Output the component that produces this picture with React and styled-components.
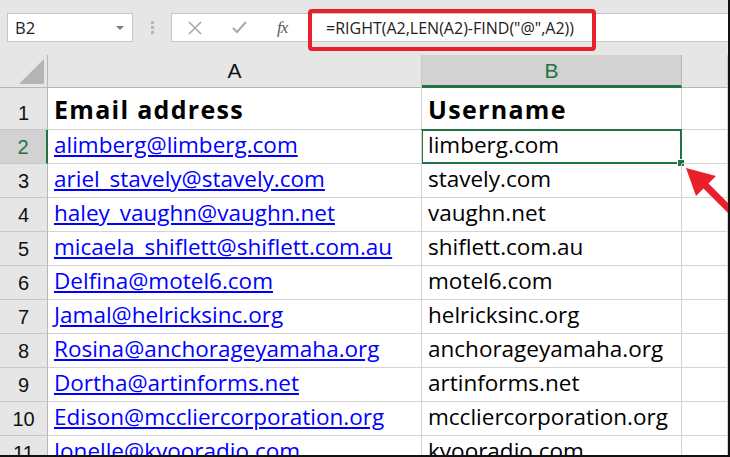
import React from 'react'
import styled, {createGlobalStyle} from 'styled-components'

const Global = createGlobalStyle`
  html, body {
    margin: 0;
    padding: 0;
    background: #fff;
  }
  body {
    font-family: "Open Sans", "Liberation Sans", sans-serif;
  }
`;

const Frame = styled.div`
  position: relative;
  width: 730px;
  height: 457px;
  box-sizing: border-box;
  border-right: 2px solid #111;
  border-bottom: 2px solid #111;
  overflow: hidden;
  background: #e6e6e6;
  display: flex;
  flex-direction: column;
`;

const FormulaBar = styled.div`
  flex-shrink: 0;
  height: 55px;
  display: flex;
  align-items: flex-start;
  padding-top: 13px;
  padding-left: 7px;
  box-sizing: border-box;
`;

const NameBox = styled.div`
  width: 126px;
  height: 29px;
  box-sizing: border-box;
  background: #fff;
  border: 1px solid #c6c6c6;
  display: flex;
  align-items: center;
  justify-content: space-between;
  padding: 0 8px 0 7px;
  font-size: 16.5px;
  color: #222;
`;

const Caret = styled.span`
  width: 0;
  height: 0;
  border-left: 4px solid transparent;
  border-right: 4px solid transparent;
  border-top: 4px solid #7a7a7a;
`;

const Grip = styled.div`
  width: 38px;
  height: 29px;
  display: flex;
  flex-direction: column;
  align-items: center;
  justify-content: center;
  gap: 2px;

  span {
    width: 3px;
    height: 3px;
    background: #b5b5b5;
  }
`;

const ButtonBox = styled.div`
  width: 137px;
  height: 29px;
  box-sizing: border-box;
  background: #fff;
  border: 1px solid #c6c6c6;
  border-right: none;
  display: flex;
  align-items: center;
  padding-left: 16px;
  gap: 30px;
  color: #a9a9a9;
`;

const Fx = styled.span`
  font-family: "Liberation Serif", serif;
  font-style: italic;
  font-size: 17px;
  color: #5a5a5a;
  letter-spacing: -1px;
`;

const FormulaInput = styled.div`
  flex: 1;
  height: 29px;
  box-sizing: border-box;
  background: #fff;
  border: 1px solid #c6c6c6;
  border-right: none;
  display: flex;
  align-items: center;
  padding-left: 17px;
  font-size: 16px;
  color: #222;
`;

const Annotation = styled.div`
  position: absolute;
  left: 308px;
  top: 9px;
  width: 288px;
  height: 42px;
  box-sizing: border-box;
  border: 4px solid #e8202a;
  border-radius: 4px;
`;

const Sheet = styled.div`
  flex: 1;
  min-height: 0;
  display: grid;
  grid-template-columns: 48px 374px 260px 1fr;
  grid-template-rows: 33px 42px repeat(10, 34px);
  background: #fff;
`;

const ColHead = styled.div`
  box-sizing: border-box;
  background: ${(p) => (p.active ? '#d2d2d2' : '#e6e6e6')};
  border-right: 1px solid ${(p) => (p.active ? '#b6b6b6' : '#c8c8c8')};
  border-bottom: ${(p) => (p.active ? '3px solid #217346' : '1px solid #b6b6b6')};
  color: ${(p) => (p.active ? '#217346' : '#111')};
  font-family: "Liberation Sans", sans-serif;
  font-size: 21px;
  display: flex;
  align-items: center;
  justify-content: center;
  padding-top: ${(p) => (p.active ? '2px' : '0')};
`;

const Corner = styled.div`
  box-sizing: border-box;
  background: #e6e6e6;
  border-right: 1px solid #b6b6b6;
  border-bottom: 1px solid #b6b6b6;
  display: flex;
  align-items: flex-end;
  justify-content: flex-end;
  padding: 0 3px 3px 0;

  span {
    width: 0;
    height: 0;
    border-left: 25px solid transparent;
    border-bottom: 25px solid #b4b4b4;
  }
`;

const RowHead = styled.div`
  box-sizing: border-box;
  background: ${(p) => (p.active ? '#d2d2d2' : '#e6e6e6')};
  border-right: ${(p) => (p.active ? '2px solid #217346' : '1px solid #b6b6b6')};
  border-bottom: 1px solid #c8c8c8;
  color: ${(p) => (p.active ? '#217346' : '#111')};
  font-family: "Liberation Sans", sans-serif;
  font-size: 20px;
  display: flex;
  align-items: flex-end;
  justify-content: center;
  padding-bottom: 4px;
`;

const Cell = styled.div`
  position: relative;
  box-sizing: border-box;
  border-right: 1px solid #d4d4d4;
  border-bottom: 1px solid #d4d4d4;
  display: flex;
  align-items: flex-end;
  padding: 0 0 3px 6px;
  white-space: nowrap;
  overflow: visible;
  font-size: ${(p) => (p.bold ? '25px' : '22.5px')};
  font-weight: ${(p) => (p.bold ? 700 : 400)};
  letter-spacing: ${(p) => (p.bold ? '1.3px' : '0')};
  color: ${(p) => (p.link ? '#0000ff' : '#000')};
  text-decoration: ${(p) => (p.link ? 'underline' : 'none')};
  text-underline-offset: 2px;
  z-index: ${(p) => (p.link ? 1 : 0)};
`;

const Selection = styled.div`
  position: absolute;
  left: -1px;
  top: -1px;
  right: -1px;
  bottom: -1px;
  border: 2px solid #217346;
  pointer-events: none;

  &::after {
    content: '';
    position: absolute;
    right: -5px;
    bottom: -5px;
    width: 6px;
    height: 6px;
    background: #217346;
    border: 1px solid #fff;
  }
`;

const Arrow = styled.svg`
  position: absolute;
  left: 680px;
  top: 160px;
`;

const rows = [
    ['alimberg@limberg.com', 'limberg.com'],
    ['ariel_stavely@stavely.com', 'stavely.com'],
    ['haley_vaughn@vaughn.net', 'vaughn.net'],
    ['micaela_shiflett@shiflett.com.au', 'shiflett.com.au'],
    ['Delfina@motel6.com', 'motel6.com'],
    ['Jamal@helricksinc.org', 'helricksinc.org'],
    ['Rosina@anchorageyamaha.org', 'anchorageyamaha.org'],
    ['Dortha@artinforms.net', 'artinforms.net'],
    ['Edison@mccliercorporation.org', 'mccliercorporation.org'],
    ['Jonelle@kyooradio.com', 'kyooradio.com'],
];

const App = () => {
    return (
        <Frame>
            <Global/>
            <FormulaBar>
                <NameBox>B2<Caret/></NameBox>
                <Grip><span/><span/><span/></Grip>
                <ButtonBox>
                    <svg width="14" height="14" viewBox="0 0 14 14">
                        <path d="M1 1 L13 13 M13 1 L1 13" stroke="#a9a9a9" strokeWidth="1.6" fill="none"/>
                    </svg>
                    <svg width="15" height="13" viewBox="0 0 15 13">
                        <path d="M1 7 L5 11 L14 1" stroke="#a9a9a9" strokeWidth="2" fill="none"/>
                    </svg>
                    <Fx>fx</Fx>
                </ButtonBox>
                <FormulaInput>=RIGHT(A2,LEN(A2)-FIND("@",A2))</FormulaInput>
            </FormulaBar>
            <Annotation/>

            <Sheet>
                <Corner><span/></Corner>
                <ColHead>A</ColHead>
                <ColHead active>B</ColHead>
                <ColHead/>

                <RowHead>1</RowHead>
                <Cell bold>Email address</Cell>
                <Cell bold>Username</Cell>
                <Cell/>

                {rows.map(([email, user], i) => (
                    <React.Fragment key={email}>
                        <RowHead active={i === 0}>{i + 2}</RowHead>
                        <Cell link>{email}</Cell>
                        <Cell>
                            {user}
                            {i === 0 && <Selection/>}
                        </Cell>
                        <Cell/>
                    </React.Fragment>
                ))}
            </Sheet>

            <Arrow width="50" height="60" viewBox="0 0 50 60">
                <polygon points="6,8 36,16 16,36" fill="#e8202a"/>
                <line x1="24" y1="24" x2="52" y2="52" stroke="#e8202a" strokeWidth="7"/>
            </Arrow>
        </Frame>
    )
}

export default App;
